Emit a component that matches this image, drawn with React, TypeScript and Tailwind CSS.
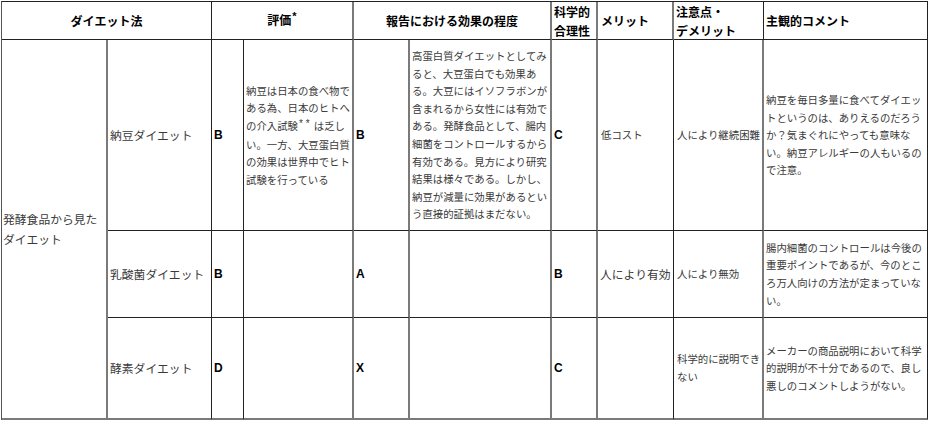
import React from "react";

const jp = { fontFamily: '"Noto Sans CJK JP", "Noto Sans", sans-serif' };
const lat = { fontFamily: '"Liberation Sans", Arial, sans-serif' };

const base = "border-r border-b border-[#222] flex items-center";
const gray = "border-r-2 border-r-[#7a7a7a]";

function Lines({ lines, className = "" }: { lines: React.ReactNode[]; className?: string }) {
  return (
    <div className={"whitespace-nowrap text-[10.4px] leading-[17.6px] text-[#3a3a3a] " + className} style={jp}>
      {lines.map((l, i) => (
        <div key={i}>{l}</div>
      ))}
    </div>
  );
}

function Grade({ g }: { g: string }) {
  return (
    <span className="text-[12px] font-bold text-black" style={lat}>
      {g}
    </span>
  );
}

function Name({ t }: { t: string }) {
  return (
    <span className="whitespace-nowrap text-[11.8px] text-[#3a3a3a]" style={jp}>
      {t}
    </span>
  );
}

export default function App() {
  return (
    <div className="h-[421px] w-[930px] bg-white">
      <div
        className="ml-px mt-px grid w-max grid-cols-[106px_104px_32px_110px_56px_142px_46px_76px_90px_164px] grid-rows-[38px_191px_87px_102px] border-l border-t border-l-[#555] border-t-[#222]"
      >
        {/* header */}
        <div className={`${base} col-span-2 justify-center`}>
          <span className="text-[12px] font-bold text-black" style={jp}>ダイエット法</span>
        </div>
        <div className={`${base} ${gray} col-span-2 justify-center`}>
          <span className="text-[12px] font-bold text-black" style={jp}>
            評価<span className="relative -top-[5px] ml-px text-[11px]" style={lat}>*</span>
          </span>
        </div>
        <div className={`${base} ${gray} col-span-2 justify-center`}>
          <span className="text-[12px] font-bold text-black" style={jp}>報告における効果の程度</span>
        </div>
        <div className={`${base} ${gray} pl-[2px]`}>
          <div className="text-[12px] font-bold leading-[19px] text-black" style={jp}>
            <div>科学的</div>
            <div>合理性</div>
          </div>
        </div>
        <div className={`${base} ${gray} pl-[3px]`}>
          <span className="text-[12px] font-bold text-black" style={jp}>メリット</span>
        </div>
        <div className={`${base} pl-[2px]`}>
          <div className="text-[12px] font-bold leading-[19px] text-black" style={jp}>
            <div>注意点・</div>
            <div>デメリット</div>
          </div>
        </div>
        <div className={`${base} pl-[2px]`}>
          <span className="text-[12px] font-bold text-black" style={jp}>主観的コメント</span>
        </div>

        {/* body col 1 */}
        <div className={`${base} ${gray} row-span-3 border-b-2 border-b-[#7a7a7a] pl-[1px]`}>
          <div className="text-[11.8px] leading-[20px] text-[#3a3a3a]" style={jp}>
            <div>発酵食品から見た</div>
            <div>ダイエット</div>
          </div>
        </div>

        {/* row 1 */}
        <div className={`${base} pl-[2px]`}><Name t="納豆ダイエット" /></div>
        <div className={`${base} pl-[2px]`}><Grade g="B" /></div>
        <div className={`${base} ${gray} pl-[2px]`}>
          <Lines
            lines={[
              "納豆は日本の食べ物で",
              "ある為、日本のヒトへ",
              <>
                の介入試験<span className="relative -top-[3px] mx-px text-[10px] tracking-[3px]" style={lat}>**</span>は乏し
              </>,
              "い。一方、大豆蛋白質",
              "の効果は世界中でヒト",
              "試験を行っている",
            ]}
          />
        </div>
        <div className={`${base} ${gray} pl-[2px]`}><Grade g="B" /></div>
        <div className={`${base} ${gray} pl-[2px]`}>
          <Lines
            lines={[
              "高蛋白質ダイエットとしてみ",
              "ると、大豆蛋白でも効果あ",
              "る。大豆にはイソフラボンが",
              "含まれるから女性には有効で",
              "ある。発酵食品として、腸内",
              "細菌をコントロールするから",
              "有効である。見方により研究",
              "結果は様々である。しかし、",
              "納豆が減量に効果があるとい",
              "う直接的証拠はまだない。",
            ]}
          />
        </div>
        <div className={`${base} ${gray} pl-[2px]`}><Grade g="C" /></div>
        <div className={`${base} pl-[3px]`}><Lines lines={["低コスト"]} /></div>
        <div className={`${base} ${gray} pl-[3px]`}><Lines lines={["人により継続困難"]} /></div>
        <div className={`${base} pl-[2px]`}>
          <Lines
            lines={[
              "納豆を毎日多量に食べてダイエッ",
              "トというのは、ありえるのだろう",
              "か？気まぐれにやっても意味な",
              "い。納豆アレルギーの人もいるの",
              "で注意。",
            ]}
          />
        </div>

        {/* row 2 */}
        <div className={`${base} pl-[2px]`}><Name t="乳酸菌ダイエット" /></div>
        <div className={`${base} pl-[2px]`}><Grade g="B" /></div>
        <div className={`${base} ${gray}`} />
        <div className={`${base} ${gray} pl-[2px]`}><Grade g="A" /></div>
        <div className={`${base} ${gray}`} />
        <div className={`${base} ${gray} pl-[2px]`}><Grade g="B" /></div>
        <div className={`${base} pl-[2px]`}><Name t="人により有効" /></div>
        <div className={`${base} ${gray} pl-[3px]`}><Lines lines={["人により無効"]} /></div>
        <div className={`${base} pl-[2px]`}>
          <Lines
            lines={[
              "腸内細菌のコントロールは今後の",
              "重要ポイントであるが、今のとこ",
              "ろ万人向けの方法が定まっていな",
              "い。",
            ]}
          />
        </div>

        {/* row 3 */}
        <div className={`${base} border-b-2 border-b-[#7a7a7a] pl-[2px]`}><Name t="酵素ダイエット" /></div>
        <div className={`${base} border-b-2 border-b-[#7a7a7a] pl-[2px]`}><Grade g="D" /></div>
        <div className={`${base} ${gray} border-b-2 border-b-[#7a7a7a]`} />
        <div className={`${base} ${gray} border-b-2 border-b-[#7a7a7a] pl-[2px]`}><Grade g="X" /></div>
        <div className={`${base} ${gray} border-b-2 border-b-[#7a7a7a]`} />
        <div className={`${base} ${gray} border-b-2 border-b-[#7a7a7a] pl-[2px]`}><Grade g="C" /></div>
        <div className={`${base} border-b-2 border-b-[#7a7a7a]`} />
        <div className={`${base} ${gray} border-b-2 border-b-[#7a7a7a] pl-[3px]`}>
          <Lines lines={["科学的に説明でき", "ない"]} />
        </div>
        <div className={`${base} border-b-2 border-b-[#7a7a7a] pl-[2px]`}>
          <Lines
            lines={[
              "メーカーの商品説明において科学",
              "的説明が不十分であるので、良し",
              "悪しのコメントしようがない。",
            ]}
          />
        </div>
      </div>
    </div>
  );
}
